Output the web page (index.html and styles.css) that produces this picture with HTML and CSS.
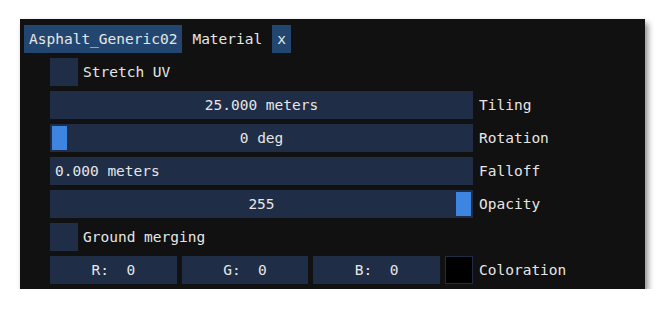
FILE: index.html
```html
<!DOCTYPE html>
<html lang="en">
<head>
  <meta charset="UTF-8" />
  <meta name="viewport" content="width=device-width, initial-scale=1.0" />
  <title>Material Panel</title>
  <link rel="stylesheet" href="styles.css">
</head>
<body>
  <div class="panel">
    <!-- Tab Header -->
    <div class="tabs">
      <div class="tab active">Asphalt_Generic02</div>
      <div class="tab">Material</div>
      <div class="tab active">x</div>
    </div>

    <!-- Properties -->
    <div class="props">
      <div class="check-row">
        <div class="checkbox"></div>
        <span>Stretch UV</span>
      </div>

      <div class="prop">
        <div class="field center">25.000 meters</div>
        <span class="label">Tiling</span>
      </div>

      <div class="prop">
        <div class="field center"><div class="grab" style="left: 2px"></div>0 deg</div>
        <span class="label">Rotation</span>
      </div>

      <div class="prop">
        <div class="field">0.000 meters</div>
        <span class="label">Falloff</span>
      </div>

      <div class="prop">
        <div class="field center">255<div class="grab" style="left: 406px"></div></div>
        <span class="label">Opacity</span>
      </div>

      <div class="check-row">
        <div class="checkbox"></div>
        <span>Ground merging</span>
      </div>

      <div class="prop">
        <div class="color-fields">
          <div class="field center">R:  0</div>
          <div class="field center">G:  0</div>
          <div class="field center">B:  0</div>
          <div class="swatch"></div>
        </div>
        <span class="label">Coloration</span>
      </div>
    </div>
  </div>
</body>
</html>
```

FILE: styles.css
```css
body {
  margin: 0;
  padding: 19px 0 0 20px;
  background: #fff;
  font-family: "DejaVu Sans Mono", "Liberation Mono", monospace;
  font-size: 14.5px;
  color: #e6e6e6;
}
/* Panel */
.panel {
  width: 625px;
  height: 270px;
  box-sizing: border-box;
  background: #111111;
  padding: 6px 0 0 4px;
  box-shadow: 3px 4px 6px rgba(0, 0, 0, 0.45);
}
/* Tabs */
.tabs {
  display: flex;
  gap: 5px;
  height: 28px;
}
.tab {
  padding: 0 5px;
  line-height: 28px;
  white-space: pre;
}
.tab.active {
  background: #234670;
}
/* Property rows */
.props {
  display: flex;
  flex-direction: column;
  gap: 5px;
  margin: 5px 0 0 26px;
}
.check-row {
  display: flex;
  align-items: center;
  gap: 5px;
  height: 28px;
}
.checkbox {
  width: 28px;
  height: 28px;
  background: #1f2d47;
}
.prop {
  display: grid;
  grid-template-columns: 423px auto;
  column-gap: 6px;
  align-items: center;
  height: 28px;
}
.field {
  position: relative;
  height: 28px;
  line-height: 28px;
  padding: 0 5px;
  background: #1f2d47;
  white-space: pre;
}
.field.center {
  text-align: center;
}
.grab {
  position: absolute;
  top: 2px;
  width: 15px;
  height: 24px;
  background: #3d85e0;
}
/* Color row */
.color-fields {
  display: grid;
  grid-template-columns: 1fr 1fr 1fr 28px;
  gap: 5px;
}
.color-fields .field {
  padding: 0;
}
.swatch {
  height: 28px;
  box-sizing: border-box;
  background: #000;
  border: 1px solid #1f2d47;
}
```
